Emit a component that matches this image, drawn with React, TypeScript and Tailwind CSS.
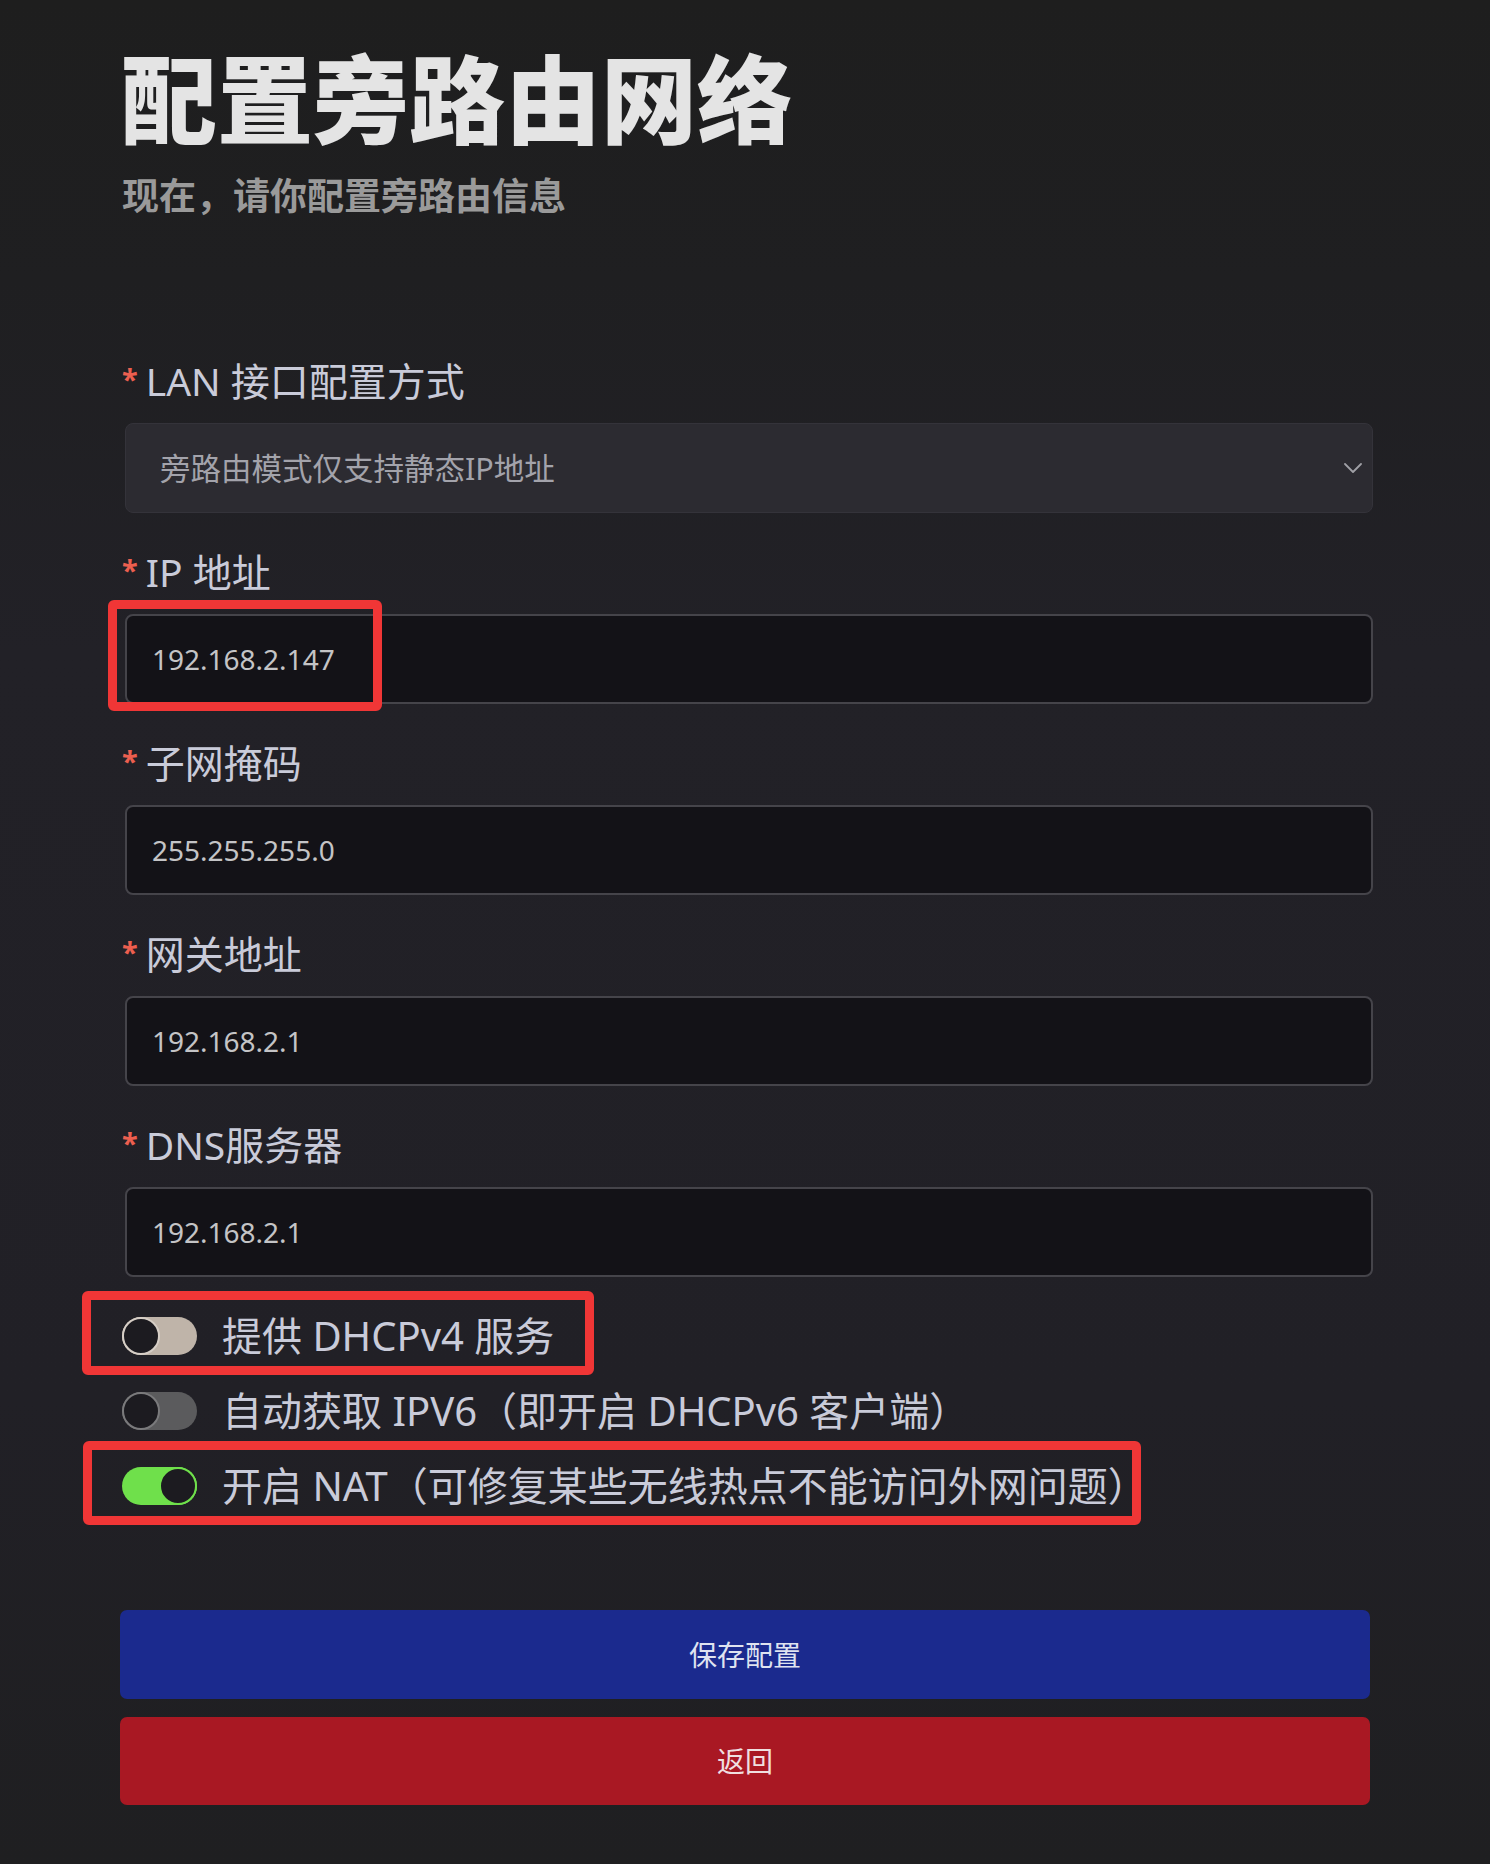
import React from "react";

const font = "font-['Noto_Sans','Noto_Sans_CJK_SC',sans-serif]";

function Label({ text }: { text: string }) {
  return (
    <div className="flex h-[44px] items-center pl-[2px]">
      <span className="mr-[8px] self-start pt-[6px] text-[29px] leading-none font-bold text-[#ec5f4f]">*</span>
      <span className="text-[39px] leading-none text-[#c9cbd9]">{text}</span>
    </div>
  );
}

function TextInput({ value, highlight }: { value: string; highlight?: boolean }) {
  return (
    <div className="relative">
      <div className="flex h-[90px] w-full items-center rounded-[8px] border-2 border-[#45444a] bg-[#131217] pl-[25px]">
        <span className="text-[28px] leading-none text-[#c4c4c6]">{value}</span>
      </div>
      {highlight && (
        <div className="pointer-events-none absolute left-[-17px] top-[-14px] h-[111px] w-[274px] rounded-[6px] border-[9px] border-[#f03636]" />
      )}
    </div>
  );
}

function Toggle({ state }: { state: "beige" | "gray" | "on" }) {
  if (state === "on") {
    return (
      <div className="flex h-[38px] w-[75px] shrink-0 items-center justify-end rounded-full bg-[#6fe04b]">
        <div className="h-[38px] w-[38px] rounded-full border-2 border-[#6fe04b] bg-[#1c1b20]" />
      </div>
    );
  }
  const track = state === "beige" ? "bg-[#bfb4a9]" : "bg-[#5b5b5d]";
  const ring = state === "beige" ? "border-[#d6cec6]" : "border-[#7a7a7c]";
  return (
    <div className={`flex h-[38px] w-[75px] shrink-0 items-center rounded-full ${track}`}>
      <div className={`h-[38px] w-[38px] rounded-full border-2 ${ring} bg-[#1c1b20]`} />
    </div>
  );
}

export default function App() {
  return (
    <div
      className={`min-h-[1864px] w-full bg-[linear-gradient(180deg,#1e1e1e_0%,#1f1f21_15%,#222127_35%,#212026_75%,#1f1f21_100%)] ${font}`}
    >
      <div className="px-[120px] pt-[43px] pb-[59px]">
        <h1 className="pl-[1px] text-[96px] leading-[104px] font-black text-[#e4e4e4] font-['Noto_Sans_CJK_SC',sans-serif]">
          配置旁路由网络
        </h1>
        <p className="mt-[27px] pl-[2px] text-[37px] leading-[40px] font-bold text-[#9a9a9a] font-['Noto_Sans_CJK_SC',sans-serif]">
          现在，请你配置旁路由信息
        </p>

        <div className="mt-[144px] mr-[-3px] flex flex-col gap-[36px]">
          <div>
            <Label text="LAN 接口配置方式" />
            <div className="mt-[21px] pl-[5px]">
              <div className="flex h-[90px] w-full items-center justify-between rounded-[8px] border border-[#34333a] bg-[#2c2b31] pl-[34px] pr-[10px]">
                <span className="text-[30.5px] leading-none text-[#a3a3ab]">旁路由模式仅支持静态IP地址</span>
                <svg width="18" height="10" viewBox="0 0 18 10" fill="none">
                  <polyline points="1,1 9,9 17,1" stroke="#a0a0a6" strokeWidth="1.8" strokeLinecap="round" strokeLinejoin="round" />
                </svg>
              </div>
            </div>
          </div>

          <div>
            <Label text="IP 地址" />
            <div className="mt-[21px] pl-[5px]">
              <TextInput value="192.168.2.147" highlight />
            </div>
          </div>

          <div>
            <Label text="子网掩码" />
            <div className="mt-[21px] pl-[5px]">
              <TextInput value="255.255.255.0" />
            </div>
          </div>

          <div>
            <Label text="网关地址" />
            <div className="mt-[21px] pl-[5px]">
              <TextInput value="192.168.2.1" />
            </div>
          </div>

          <div>
            <Label text="DNS服务器" />
            <div className="mt-[21px] pl-[5px]">
              <TextInput value="192.168.2.1" />
            </div>
          </div>
        </div>

        <div className="mt-[21px] flex flex-col pl-[2px]">
          <div className="relative flex h-[75px] items-center gap-[25px]">
            <Toggle state="beige" />
            <span className="text-[40px] leading-none whitespace-nowrap text-[#c9cbd9]">提供 DHCPv4 服务</span>
            <div className="pointer-events-none absolute left-[-40px] top-[-7px] h-[84px] w-[512px] rounded-[6px] border-[9px] border-[#f03636]" />
          </div>
          <div className="flex h-[75px] items-center gap-[25px]">
            <Toggle state="gray" />
            <span className="text-[40px] leading-none whitespace-nowrap text-[#c9cbd9]">自动获取 IPV6（即开启 DHCPv6 客户端）</span>
          </div>
          <div className="relative flex h-[75px] items-center gap-[25px]">
            <Toggle state="on" />
            <span className="text-[40px] leading-none whitespace-nowrap text-[#c9cbd9]">开启 NAT（可修复某些无线热点不能访问外网问题）</span>
            <div className="pointer-events-none absolute left-[-39px] top-[-7px] h-[84px] w-[1058px] rounded-[6px] border-[9px] border-[#f03636]" />
          </div>
        </div>

        <div className="mt-[87px] flex flex-col gap-[18px]">
          <button className="flex h-[89px] w-full items-center justify-center rounded-[7px] bg-[#1b2a8e] text-[28px] text-[#dfe3f0]">
            保存配置
          </button>
          <button className="flex h-[88px] w-full items-center justify-center rounded-[7px] bg-[#a91823] text-[28px] text-[#f0dfe0]">
            返回
          </button>
        </div>
      </div>
    </div>
  );
}
